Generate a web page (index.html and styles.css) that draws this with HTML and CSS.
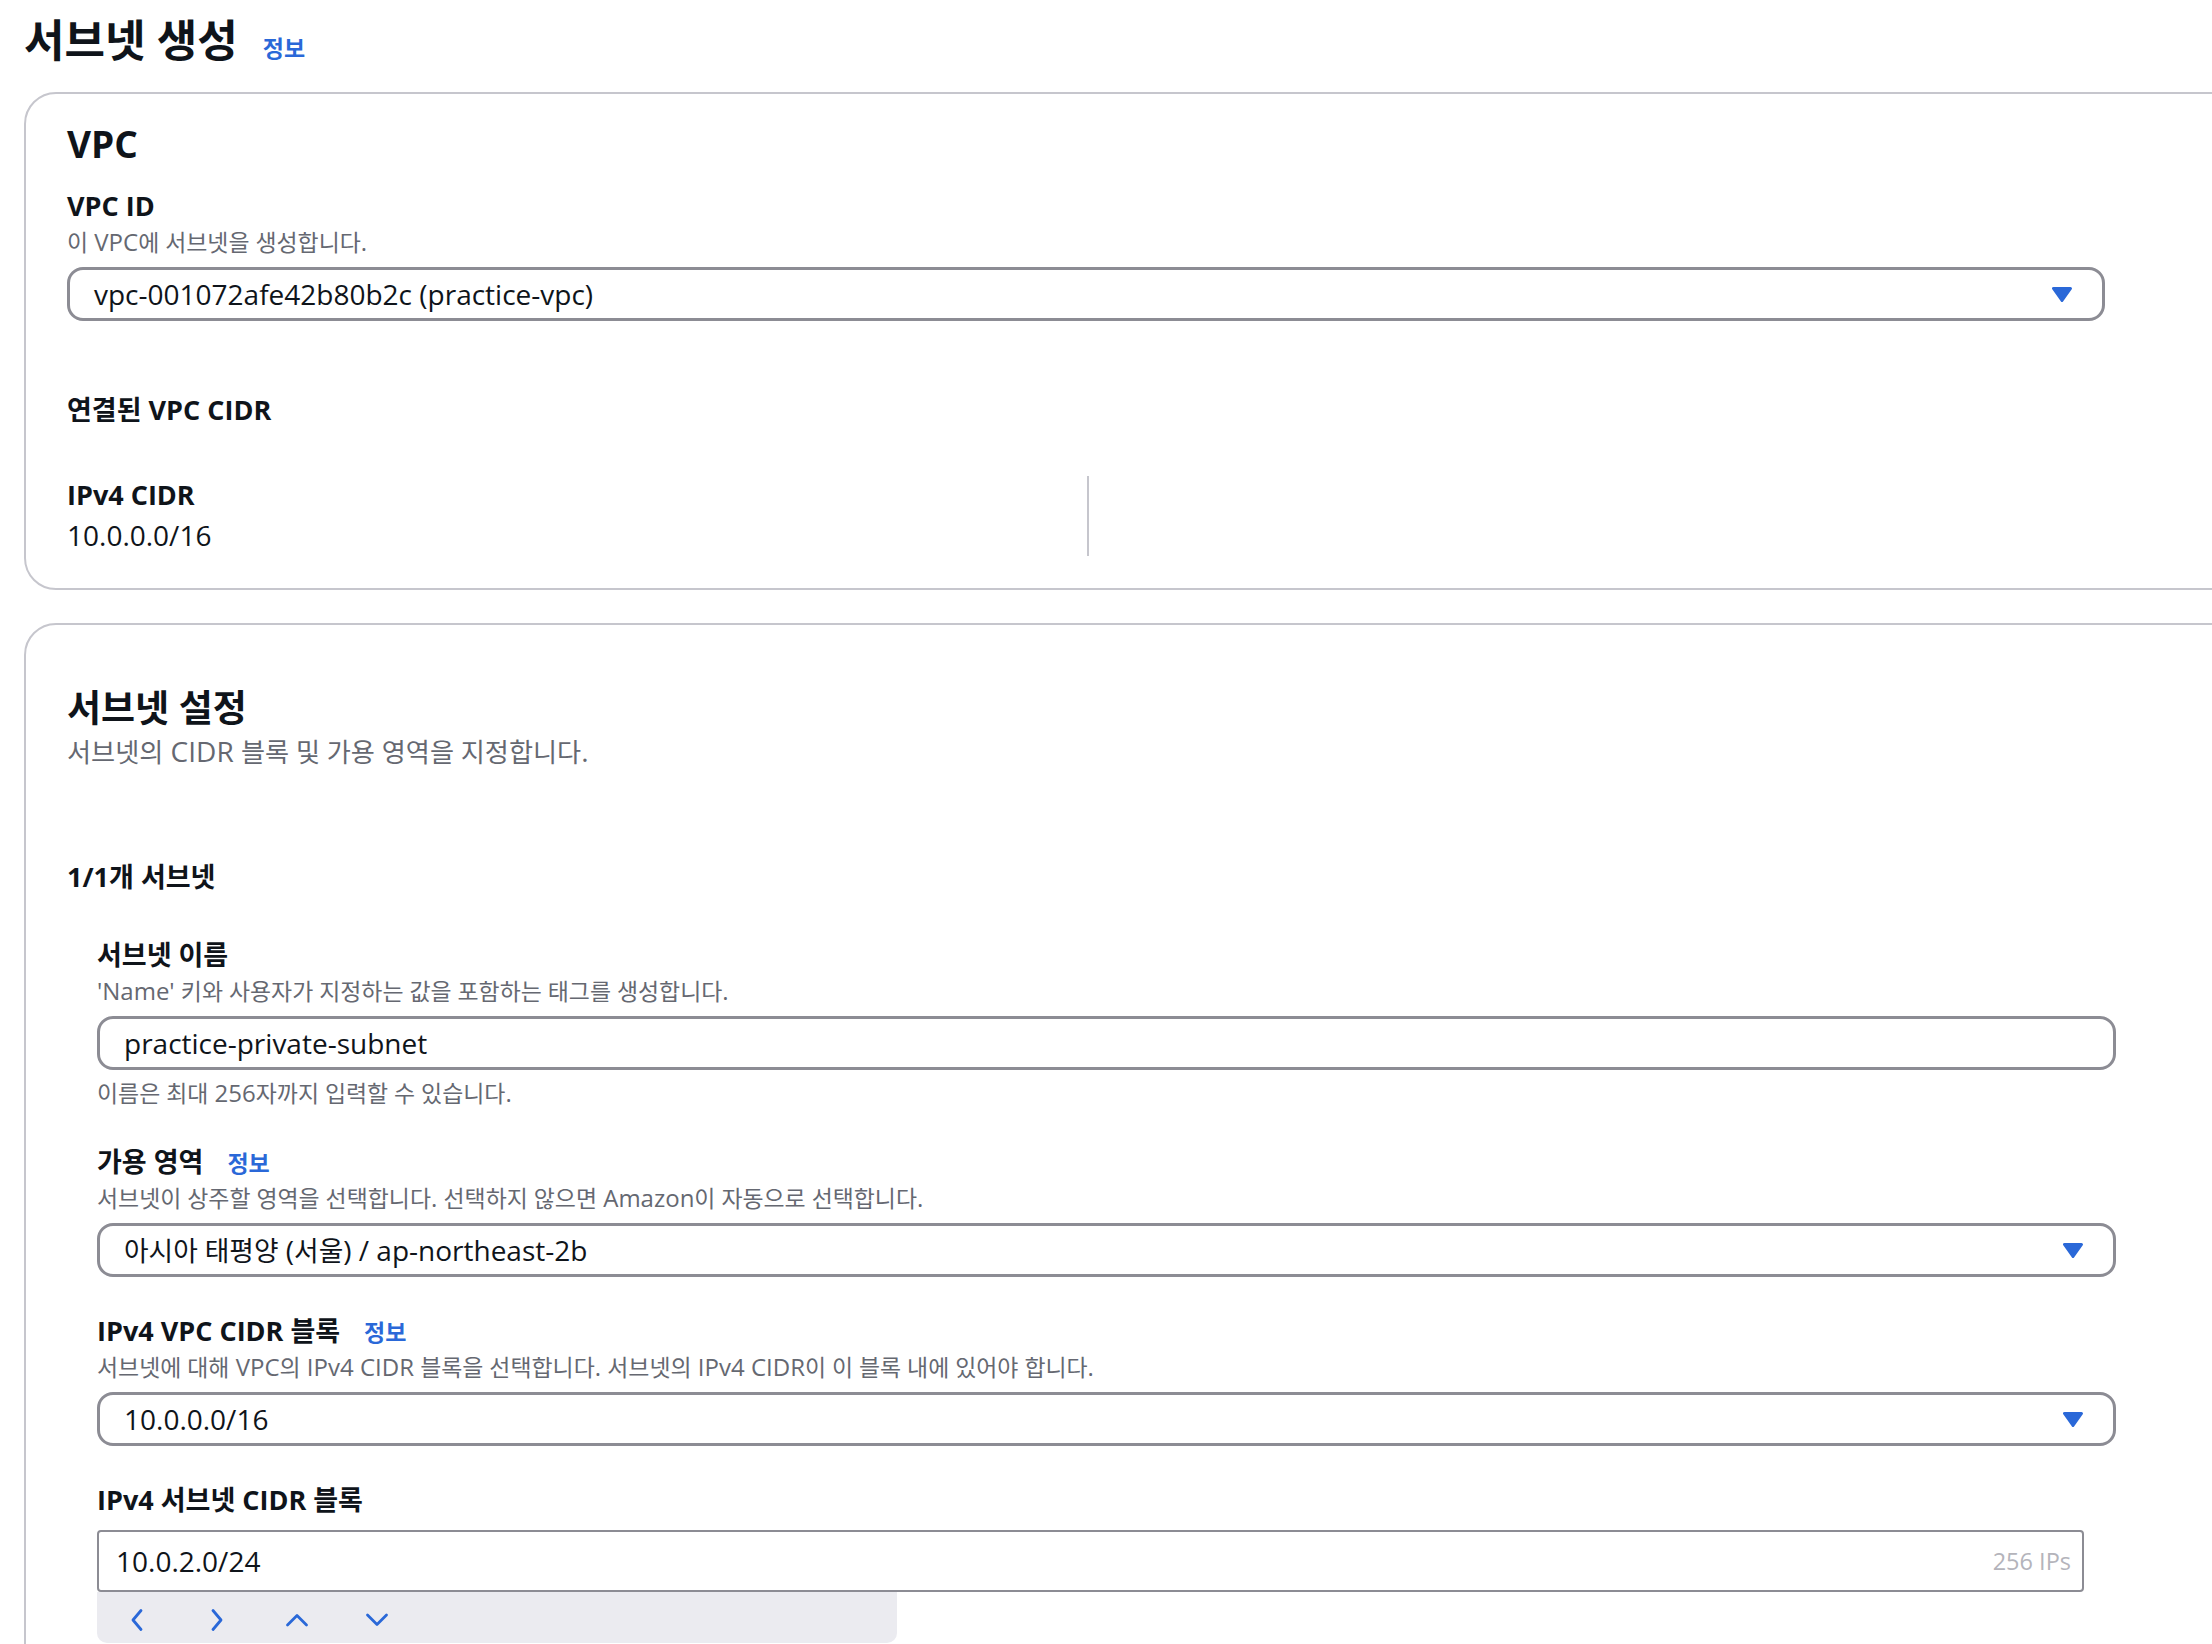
FILE: index.html
```html
<!DOCTYPE html>
<html lang="ko">
<head>
<meta charset="utf-8">
<title>서브넷 생성</title>
<link rel="stylesheet" href="styles.css">
</head>
<body>
<main class="page">
  <header class="page-header">
    <h1 class="page-title">서브넷 생성</h1>
    <a class="info" href="#">정보</a>
  </header>

  <section class="card card-vpc">
    <h2 class="card-title">VPC</h2>
    <div class="field field-first">
      <div class="label">VPC ID</div>
      <div class="desc"><span class="k">이</span> VPC<span class="k">에 서브넷을 생성합니다</span>.</div>
      <div class="control select select-vpc">
        <span class="control-value">vpc-001072afe42b80b2c (practice-vpc)</span>
        <svg class="caret" width="20" height="15" viewBox="0 0 20 15" aria-hidden="true"><path d="M1.5 1.5H18.5L10 13.5Z" fill="currentColor" stroke="currentColor" stroke-width="3" stroke-linejoin="round"/></svg>
      </div>
    </div>

    <div class="label subheading"><span class="k">연결된</span> VPC CIDR</div>
    <div class="kv">
      <div class="kv-col">
        <div class="label">IPv4 CIDR</div>
        <div class="kv-value">10.0.0.0/16</div>
      </div>
      <div class="kv-col kv-col-divider"></div>
    </div>
  </section>

  <section class="card card-subnet">
    <h2 class="card-title">서브넷 설정</h2>
    <p class="card-desc"><span class="k">서브넷의</span> CIDR <span class="k">블록 및 가용 영역을 지정합니다</span>.</p>

    <div class="label group-title">1/1<span class="k">개 서브넷</span></div>

    <div class="subnet-fields">
      <div class="field field-first">
        <div class="label"><span class="k">서브넷 이름</span></div>
        <div class="desc">'Name' <span class="k">키와 사용자가 지정하는 값을 포함하는 태그를 생성합니다</span>.</div>
        <div class="control input input-wide">
          <span class="control-value">practice-private-subnet</span>
        </div>
        <div class="hint"><span class="k">이름은 최대</span> 256<span class="k">자까지 입력할 수 있습니다</span>.</div>
      </div>

      <div class="field">
        <div class="label-row">
          <div class="label"><span class="k">가용 영역</span></div>
          <a class="info" href="#">정보</a>
        </div>
        <div class="desc"><span class="k">서브넷이 상주할 영역을 선택합니다</span>. <span class="k">선택하지 않으면</span> Amazon<span class="k">이 자동으로 선택합니다</span>.</div>
        <div class="control select input-wide">
          <span class="control-value"><span class="k">아시아 태평양</span> (<span class="k">서울</span>) / ap-northeast-2b</span>
          <svg class="caret" width="20" height="15" viewBox="0 0 20 15" aria-hidden="true"><path d="M1.5 1.5H18.5L10 13.5Z" fill="currentColor" stroke="currentColor" stroke-width="3" stroke-linejoin="round"/></svg>
        </div>
      </div>

      <div class="field">
        <div class="label-row">
          <div class="label">IPv4 VPC CIDR <span class="k">블록</span></div>
          <a class="info" href="#">정보</a>
        </div>
        <div class="desc"><span class="k">서브넷에 대해</span> VPC<span class="k">의</span> IPv4 CIDR <span class="k">블록을 선택합니다</span>. <span class="k">서브넷의</span> IPv4 CIDR<span class="k">이 이 블록 내에 있어야 합니다</span>.</div>
        <div class="control select input-wide">
          <span class="control-value">10.0.0.0/16</span>
          <svg class="caret" width="20" height="15" viewBox="0 0 20 15" aria-hidden="true"><path d="M1.5 1.5H18.5L10 13.5Z" fill="currentColor" stroke="currentColor" stroke-width="3" stroke-linejoin="round"/></svg>
        </div>
      </div>

      <div class="field">
        <div class="label">IPv4 <span class="k">서브넷</span> CIDR <span class="k">블록</span></div>
        <div class="cidr-input">
          <span class="control-value">10.0.2.0/24</span>
          <span class="ips">256 IPs</span>
        </div>
        <div class="toolbar">
          <span class="tool-btn"><svg width="16" height="24" viewBox="0 0 16 24" aria-hidden="true"><path d="M12 2.5L4 12L12 21.5" fill="none" stroke="currentColor" stroke-width="2.8" stroke-linecap="round" stroke-linejoin="round"/></svg></span>
          <span class="tool-btn"><svg width="16" height="24" viewBox="0 0 16 24" aria-hidden="true"><path d="M4 2.5L12 12L4 21.5" fill="none" stroke="currentColor" stroke-width="2.8" stroke-linecap="round" stroke-linejoin="round"/></svg></span>
          <span class="tool-btn"><svg width="24" height="16" viewBox="0 0 24 16" aria-hidden="true"><path d="M2.5 13L12 3.5L21.5 13" fill="none" stroke="currentColor" stroke-width="2.8" stroke-linecap="round" stroke-linejoin="round"/></svg></span>
          <span class="tool-btn"><svg width="24" height="16" viewBox="0 0 24 16" aria-hidden="true"><path d="M2.5 3L12 12.5L21.5 3" fill="none" stroke="currentColor" stroke-width="2.8" stroke-linecap="round" stroke-linejoin="round"/></svg></span>
        </div>
      </div>
    </div>
  </section>
</main>
</body>
</html>
```

FILE: styles.css
```css
* {
  box-sizing: border-box;
}

html,
body {
  margin: 0;
  padding: 0;
}

body {
  font-family: "Open Sans", "Noto Sans CJK KR", sans-serif;
  color: #0f141a;
  background: #ffffff;
  overflow: hidden;
}

.page {
  padding: 12px 0 0 24px;
}

.page-header {
  display: flex;
  align-items: baseline;
  gap: 25px;
  margin-bottom: 24px;
}

.page-title {
  margin: 0;
  font-size: 44px;
  line-height: 56px;
  font-weight: 700;
}

.info {
  color: #2a68d8;
  font-size: 23px;
  line-height: 20px;
  font-weight: 700;
  text-decoration: none;
}

.k {
  font-size: 0.955em;
  line-height: 1;
}

.label .k {
  font-size: 1em;
}

.card {
  width: 2320px;
  border: 2px solid #c6c6cd;
  border-radius: 32px;
  padding: 28px 41px 32px;
}

.card + .card {
  margin-top: 33px;
}

.card-subnet {
  padding-top: 61px;
}

.card-title {
  margin: 0;
  font-size: 37px;
  line-height: 44px;
  font-weight: 700;
}

.card-desc {
  margin: 4px 0 0;
  font-size: 28px;
  line-height: 34px;
  color: #656871;
}

.card-desc .k {
  font-size: 0.935em;
}

.label {
  font-size: 27px;
  line-height: 30px;
  font-weight: 700;
  white-space: nowrap;
}

.label-row {
  display: flex;
  align-items: baseline;
  gap: 24px;
}

.desc,
.hint {
  font-size: 24px;
  line-height: 30px;
  color: #656871;
  white-space: nowrap;
}

.desc {
  margin-top: 6px;
}

.hint {
  margin: 8px 0 2px;
}

.card-vpc .field-first {
  margin-top: 25px;
}

.control {
  margin-top: 10px;
  display: flex;
  align-items: center;
  height: 54px;
  border: 3px solid #8c8c94;
  border-radius: 16px;
  padding: 0 30px 0 24px;
}

.select {
  justify-content: space-between;
}

.select-vpc {
  width: 2038px;
}

.input-wide {
  width: 2019px;
}

.control-value {
  font-size: 28px;
  line-height: 36px;
  white-space: nowrap;
}

.caret {
  flex: none;
  color: #2a68d8;
}

.subheading {
  margin-top: 74px;
}

.kv {
  margin-top: 51px;
  display: grid;
  grid-template-columns: 1020px 1fr;
}

.kv-col {
  padding: 4px 0 3px;
}

.kv-col-divider {
  border-left: 2px solid #c6c6cd;
}

.kv-value {
  margin-top: 7px;
  font-size: 28px;
  line-height: 36px;
}

.group-title {
  margin-top: 94px;
}

.subnet-fields {
  padding-left: 30px;
}

.subnet-fields .field-first {
  margin-top: 48px;
}

.field + .field {
  margin-top: 39px;
}

.cidr-input {
  margin-top: 15px;
  width: 1987px;
  height: 62px;
  display: flex;
  align-items: center;
  justify-content: space-between;
  border: 2px solid #8c8c94;
  border-radius: 4px;
  padding: 0 11px 0 17px;
}

.ips {
  font-size: 23.5px;
  line-height: 30px;
  color: #b4b4bb;
}

.toolbar {
  width: 800px;
  height: 51px;
  background: #ebebf0;
  border-radius: 0 0 10px 10px;
  display: flex;
  align-items: center;
  gap: 40px;
  padding: 4px 0 0 20px;
}

.tool-btn {
  width: 40px;
  height: 40px;
  display: flex;
  align-items: center;
  justify-content: center;
  color: #2a68d8;
}
```
